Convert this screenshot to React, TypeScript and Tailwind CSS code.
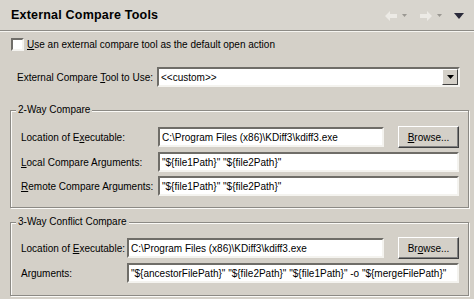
const font = { fontFamily: '"Liberation Sans", Arial, sans-serif' };

function Field({ value, className = '' }: { value: string; className?: string }) {
  return (
    <div
      className={`h-[20px] bg-white border-2 border-t-[#6f6d68] border-l-[#6f6d68] border-b-[#f4f3ef] border-r-[#f4f3ef] flex items-center px-[2px] text-[10px] text-black whitespace-nowrap overflow-hidden ${className}`}
    >
      {value}
    </div>
  );
}

function BrowseButton({ mn }: { mn: 'B' | 'o' }) {
  return (
    <div className="w-[61px] h-[22px] shrink-0 bg-[#d4d0c8] border border-t-white border-l-white border-b-[#404040] border-r-[#404040] shadow-[inset_-1px_-1px_0_#808080] flex items-center justify-center text-[10px] text-black">
      {mn === 'B' ? (
        <span>
          <u>B</u>rowse...
        </span>
      ) : (
        <span>
          Br<u>o</u>wse...
        </span>
      )}
    </div>
  );
}

function Group({ title, children, className = '' }: { title: string; children: React.ReactNode; className?: string }) {
  return (
    <div className={`relative ml-[10px] mr-[5px] border border-[#8c8a85] shadow-[1px_1px_0_#fbfaf7,inset_1px_1px_0_#fbfaf7] ${className}`}>
      <span className="absolute -top-[8px] left-[5px] px-[2px] bg-[#d4d0c8] text-[10px] leading-[14px] text-black whitespace-nowrap">{title}</span>
      {children}
    </div>
  );
}

function Arrow({ dir, color }: { dir: 'l' | 'r'; color: string }) {
  return (
    <svg width="12" height="10" viewBox="0 0 12 10">
      {dir === 'l' ? (
        <path d="M0 5 L5 0 L5 3 L12 3 L12 7 L5 7 L5 10 Z" fill={color} />
      ) : (
        <path d="M12 5 L7 0 L7 3 L0 3 L0 7 L7 7 L7 10 Z" fill={color} />
      )}
    </svg>
  );
}

function SmallDrop() {
  return (
    <svg width="5" height="3" viewBox="0 0 5 3">
      <path d="M0 0 L5 0 L2.5 3 Z" fill="#9a9892" />
    </svg>
  );
}

export default function App() {
  return (
    <div className="w-[474px] h-[299px] bg-[#d4d0c8] overflow-hidden text-black whitespace-nowrap" style={font}>
      <div className="h-[31px] flex items-center justify-between pl-[11px] pr-[10px] border-b border-[#8d8b86] bg-[#d8d5ce]">
        <span className="text-[12.5px] font-bold tracking-[0.2px] mt-[1px]">External Compare Tools</span>
        <div className="flex items-center gap-[5px] mt-[1px]">
          <Arrow dir="l" color="#eceae5" />
          <SmallDrop />
          <span className="w-[3px]" />
          <Arrow dir="r" color="#eceae5" />
          <SmallDrop />
          <span className="w-[2px]" />
          <svg width="10" height="6" viewBox="0 0 10 6">
            <path d="M0 0 L10 0 L5 6 Z" fill="#2a2a3a" />
          </svg>
        </div>
      </div>
      <div className="border-t border-[#f6f5f1]" />

      <div className="flex items-center pl-[11px] mt-[5px] h-[14px] text-[10px]">
        <div className="w-[13px] h-[13px] bg-white border-2 border-t-[#6f6d68] border-l-[#6f6d68] border-b-[#f4f3ef] border-r-[#f4f3ef]" />
        <span className="ml-[3px]">
          <u>U</u>se an external compare tool as the default open action
        </span>
      </div>

      <div className="flex items-center h-[20px] mt-[16px] pl-[17px] pr-[14px] text-[10px]">
        <span className="w-[140px] shrink-0">
          External Compare <u>T</u>ool to Use:
        </span>
        <div className="flex-1 h-[20px] bg-white border-2 border-t-[#6f6d68] border-l-[#6f6d68] border-b-[#f4f3ef] border-r-[#f4f3ef] flex items-center pl-[2px]">
          <span className="flex-1">&lt;&lt;custom&gt;&gt;</span>
          <div className="w-[16px] h-[16px] bg-[#d4d0c8] border border-t-white border-l-white border-b-[#404040] border-r-[#404040] flex items-center justify-center">
            <svg width="7" height="4" viewBox="0 0 7 4">
              <path d="M0 0 L7 0 L3.5 4 Z" fill="#000" />
            </svg>
          </div>
        </div>
      </div>

      <Group title="2-Way Compare" className="mt-[23px] h-[98px] pt-[15px] pl-[10px] pr-[9px]">
        <div className="flex flex-col gap-[4px] text-[10px]">
          <div className="flex items-center h-[22px]">
            <span className="w-[137px] shrink-0">
              Location of E<u>x</u>ecutable:
            </span>
            <Field value="C:\Program Files (x86)\KDiff3\kdiff3.exe" className="flex-1" />
            <div className="w-[14px] shrink-0" />
            <BrowseButton mn="B" />
          </div>
          <div className="flex items-center h-[20px]">
            <span className="w-[137px] shrink-0">
              <u>L</u>ocal Compare Arguments:
            </span>
            <Field value={'"${file1Path}" "${file2Path}"'} className="flex-1" />
          </div>
          <div className="flex items-center h-[20px]">
            <span className="w-[137px] shrink-0">
              <u>R</u>emote Compare Arguments:
            </span>
            <Field value={'"${file1Path}" "${file2Path}"'} className="flex-1" />
          </div>
        </div>
      </Group>

      <Group title="3-Way Conflict Compare" className="mt-[14px] h-[74px] pt-[14px] pl-[10px] pr-[9px]">
        <div className="flex flex-col gap-[4px] text-[10px]">
          <div className="flex items-center h-[22px]">
            <span className="w-[106px] shrink-0">
              Location of <u>E</u>xecutable:
            </span>
            <Field value="C:\Program Files (x86)\KDiff3\kdiff3.exe" className="flex-1" />
            <div className="w-[14px] shrink-0" />
            <BrowseButton mn="o" />
          </div>
          <div className="flex items-center h-[20px]">
            <span className="w-[106px] shrink-0">Arguments:</span>
            <Field
              value={'"${ancestorFilePath}" "${file2Path}" "${file1Path}" -o "${mergeFilePath}"'}
              className="flex-1"
            />
          </div>
        </div>
      </Group>
    </div>
  );
}
